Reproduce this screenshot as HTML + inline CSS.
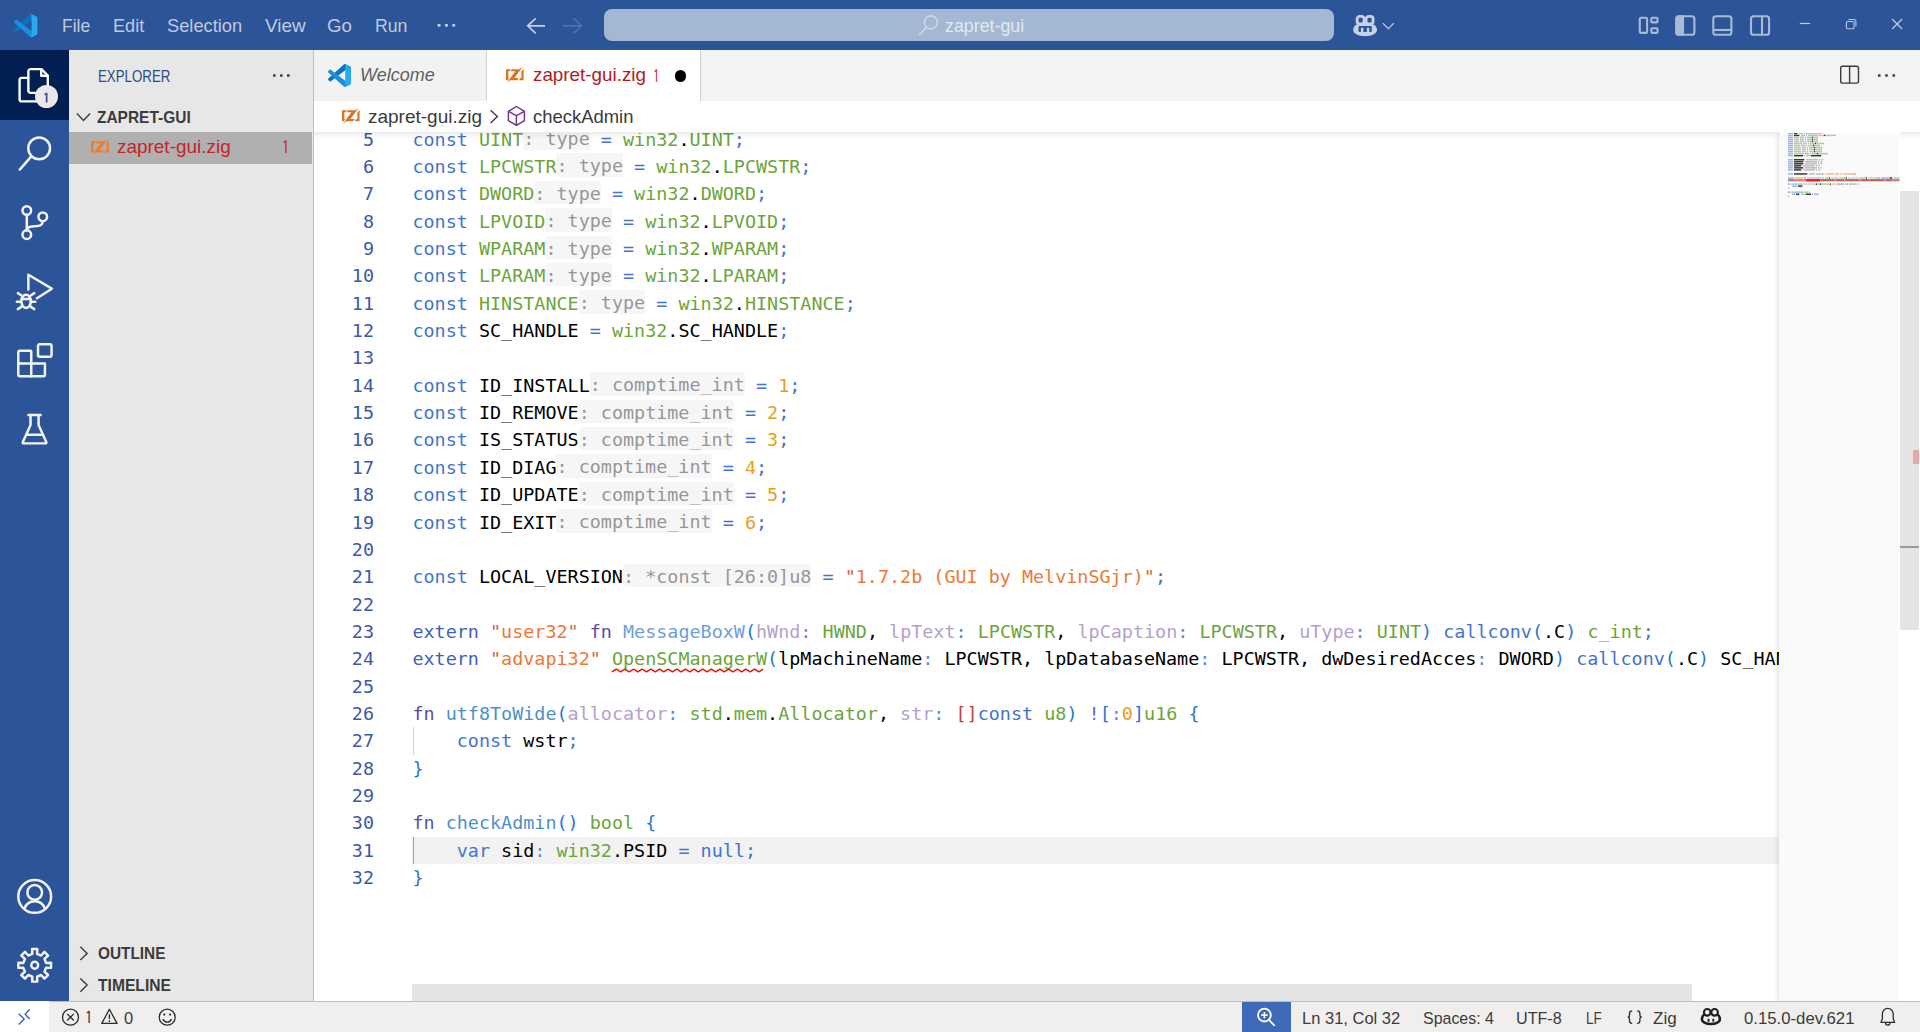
<!DOCTYPE html>
<html lang="en">
<head>
<meta charset="utf-8">
<title>zapret-gui.zig - zapret-gui - Visual Studio Code</title>
<style>
*{box-sizing:border-box;margin:0;padding:0}
html,body{width:1920px;height:1032px;overflow:hidden;background:#fff}
body{font-family:"Liberation Sans",sans-serif;color:#3b3b3b;position:relative;-webkit-font-smoothing:antialiased}
.abs{position:absolute}
.t{position:absolute;white-space:pre;line-height:1;transform-origin:0 50%;display:block}
svg{position:absolute;overflow:visible}
#titlebar{left:0;top:0;width:1920px;height:50px;background:#2c5499}
#activity{left:0;top:50px;width:69px;height:950.6px;background:#2c5499}
#act-active{left:0;top:50px;width:69px;height:69.5px;background:#011f50}
#sidebar{left:69px;top:50px;width:244.5px;height:950.6px;background:#e7e7e7}
#sideborder{left:313px;top:50px;width:1.2px;height:950.6px;background:#c0c0c0}
#selrow{left:69px;top:132px;width:243px;height:32px;background:#b0b0b0}
#tabbar{left:314px;top:50px;width:1606px;height:51px;background:#f3f3f3}
#tab1{left:314px;top:50px;width:172.5px;height:51px;background:#f2f2f2;border-right:1.3px solid #d0d0d0}
#tab2{left:486.6px;top:50px;width:214px;height:51px;background:#fff;border-right:1.3px solid #d0d0d0}
#crumbs{left:314px;top:101px;width:1606px;height:31.5px;background:#fff}
#editor{left:314px;top:132.5px;width:1606px;height:868.1px;background:#fff;overflow:hidden}
#edshadow{left:0;top:0;width:1606px;height:6px;background:linear-gradient(rgba(0,0,0,.11),rgba(0,0,0,0))}
#curline{left:98px;top:704.4px;width:1367.3px;height:27px;background:#f2f2f2}
#minimap{left:1465.3px;top:0;width:120.2px;height:868px;background:#fafafa;box-shadow:-3px 0 4px -1px rgba(0,0,0,.10)}
#vslider{left:1585.5px;top:58.3px;width:19.5px;height:439.2px;background:#e4e4e4}
#hslider{left:98px;top:851.8px;width:1279.8px;height:17px;background:#e4e4e4}
#status{left:0;top:1000.6px;width:1920px;height:32px;background:#f0efee;border-top:1.3px solid #bdbdbd}
#remote{left:0;top:1000.6px;width:49.2px;height:32px;background:#fff}
#zoomitem{left:1242px;top:1001.9px;width:48.8px;height:31px;background:#3f6ab8}
.code{position:absolute;left:0;white-space:pre;font-family:"DejaVu Sans Mono","Liberation Mono",monospace;font-size:18.42px;line-height:27.36px;height:27.36px;color:#000}
.ln{position:absolute;width:60px;text-align:right;left:0;white-space:pre;font-family:"DejaVu Sans Mono","Liberation Mono",monospace;font-size:18.42px;line-height:27.36px;height:27.36px;color:#3c58a8}
.k{color:#4373d0}.ke{color:#3d62b8}.kf{color:#574ea3}.ty{color:#6ba539}.f{color:#4d8fcc}.fe{color:#6c9fdb}
.p{color:#b4a0cc}.s{color:#f07832}.sq{color:#cf6a34}.n{color:#e5a019}.o{color:#4373d0}.c{color:#5b8bd8}.b{color:#2878d0}.br{color:#c04040}
.h{color:#969696;background:#f6f6f6;border-radius:3px;padding:2.4px 0 0}
.sq-err{}
</style>
</head>
<body>
<div class="abs" id="titlebar"></div>
<div class="abs" id="activity"></div>
<div class="abs" id="act-active"></div>
<div class="abs" id="sidebar"></div>
<div class="abs" id="selrow"></div>
<div class="abs" id="sideborder"></div>
<div class="abs" id="tabbar"></div>
<div class="abs" id="tab1"></div>
<div class="abs" id="tab2"></div>
<div class="abs" id="crumbs"></div>
<div class="abs" id="cmdcenter" style="left:604.3px;top:9.3px;width:729.5px;height:31.5px;background:#a4b8d3;border-radius:8px"></div>
<div class="abs" id="status"></div>
<div class="abs" id="remote"></div>
<div class="abs" id="zoomitem"></div>
<div class="abs" id="dirtydot" style="left:674.6px;top:70px;width:11.6px;height:11.6px;border-radius:50%;background:#000"></div>

<!-- text labels -->
<span class="t" style="left:61.90px;top:16.99px;font-size:18.72px;color:#c0cadf;transform:scaleX(0.9356)">File</span>
<span class="t" style="left:113.15px;top:16.99px;font-size:18.72px;color:#c0cadf;transform:scaleX(0.9679)">Edit</span>
<span class="t" style="left:167.40px;top:16.99px;font-size:18.72px;color:#c0cadf;transform:scaleX(0.9772)">Selection</span>
<span class="t" style="left:264.90px;top:16.99px;font-size:18.72px;color:#c0cadf;transform:scaleX(1.0124)">View</span>
<span class="t" style="left:327.40px;top:16.99px;font-size:18.72px;color:#c0cadf;transform:scaleX(0.9999)">Go</span>
<span class="t" style="left:375.15px;top:16.99px;font-size:18.72px;color:#c0cadf;transform:scaleX(0.9457)">Run</span>
<span class="t" style="left:945.40px;top:17.52px;font-size:17.5px;color:#e1e8f2;transform:scaleX(1.0176)">zapret-gui</span>
<span class="t" style="left:98.15px;top:68.69px;font-size:15.84px;color:#2c4a80;transform:scaleX(0.8403)">EXPLORER</span>
<span class="t" style="left:97.40px;top:110.44px;font-size:15.84px;color:#3b3b3b;transform:scaleX(0.9775);font-weight:700">ZAPRET-GUI</span>
<span class="t" style="left:117.40px;top:137.99px;font-size:18.72px;color:#c4242a;transform:scaleX(1.0126)">zapret-gui.zig</span>
<span class="t" style="left:281.90px;top:138.43px;font-size:18.2px;color:#c4242a;transform:scaleX(0.8192);font-family:'IPAGothic','Liberation Sans',sans-serif">1</span>
<span class="t" style="left:97.65px;top:946.19px;font-size:15.84px;color:#3b3b3b;transform:scaleX(0.9709);font-weight:700">OUTLINE</span>
<span class="t" style="left:97.65px;top:977.94px;font-size:15.84px;color:#3b3b3b;transform:scaleX(0.9875);font-weight:700">TIMELINE</span>
<span class="t" style="left:360.15px;top:66.24px;font-size:18.72px;color:#5f5f5f;transform:scaleX(0.9625);font-style:italic">Welcome</span>
<span class="t" style="left:532.65px;top:66.49px;font-size:18.72px;color:#b3191f;transform:scaleX(1.0060)">zapret-gui.zig</span>
<span class="t" style="left:653.40px;top:66.93px;font-size:18.2px;color:#c0353a;transform:scaleX(0.7368);font-family:'IPAGothic','Liberation Sans',sans-serif">1</span>
<span class="t" style="left:368.15px;top:108.49px;font-size:18.72px;color:#3b3b3b;transform:scaleX(1.0149)">zapret-gui.zig</span>
<span class="t" style="left:532.65px;top:108.49px;font-size:18.72px;color:#3b3b3b;transform:scaleX(0.9860)">checkAdmin</span>
<span class="t" style="left:85.40px;top:1009.44px;font-size:17.6px;color:#3b3b3b;transform:scaleX(0.8753);font-family:'IPAGothic','Liberation Sans',sans-serif">1</span>
<span class="t" style="left:124.40px;top:1009.71px;font-size:17.28px;color:#3b3b3b;transform:scaleX(0.9574)">0</span>
<span class="t" style="left:1301.90px;top:1009.71px;font-size:17.28px;color:#3b3b3b;transform:scaleX(0.9560)">Ln 31, Col 32</span>
<span class="t" style="left:1422.65px;top:1009.71px;font-size:17.28px;color:#3b3b3b;transform:scaleX(0.9239)">Spaces: 4</span>
<span class="t" style="left:1516.40px;top:1009.71px;font-size:17.28px;color:#3b3b3b;transform:scaleX(0.9341)">UTF-8</span>
<span class="t" style="left:1585.65px;top:1009.71px;font-size:17.28px;color:#3b3b3b;transform:scaleX(0.7789)">LF</span>
<span class="t" style="left:1653.15px;top:1009.71px;font-size:17.28px;color:#3b3b3b;transform:scaleX(0.9875)">Zig</span>
<span class="t" style="left:1743.90px;top:1009.71px;font-size:17.28px;color:#3b3b3b;transform:scaleX(0.9695)">0.15.0-dev.621</span>
<div class="abs" id="editor">
<div class="abs" id="curline"></div>
<div class="abs" style="left:98.5px;top:594.96px;width:1.4px;height:27.36px;background:#d3d3d3"></div>
<div class="abs" style="left:98.5px;top:704.40px;width:1.4px;height:27.36px;background:#a0a0a0"></div>
<div class="ln" style="top:-7.01px">5</div>
<div class="code" style="left:98.40px;top:-7.01px"><span class="k">const</span> <span class="ty">UINT</span><span class="h">: type</span> <span class="o">=</span> <span class="ty">win32</span>.<span class="ty">UINT</span><span class="o">;</span></div>
<div class="ln" style="top:20.35px">6</div>
<div class="code" style="left:98.40px;top:20.35px"><span class="k">const</span> <span class="ty">LPCWSTR</span><span class="h">: type</span> <span class="o">=</span> <span class="ty">win32</span>.<span class="ty">LPCWSTR</span><span class="o">;</span></div>
<div class="ln" style="top:47.71px">7</div>
<div class="code" style="left:98.40px;top:47.71px"><span class="k">const</span> <span class="ty">DWORD</span><span class="h">: type</span> <span class="o">=</span> <span class="ty">win32</span>.<span class="ty">DWORD</span><span class="o">;</span></div>
<div class="ln" style="top:75.07px">8</div>
<div class="code" style="left:98.40px;top:75.07px"><span class="k">const</span> <span class="ty">LPVOID</span><span class="h">: type</span> <span class="o">=</span> <span class="ty">win32</span>.<span class="ty">LPVOID</span><span class="o">;</span></div>
<div class="ln" style="top:102.43px">9</div>
<div class="code" style="left:98.40px;top:102.43px"><span class="k">const</span> <span class="ty">WPARAM</span><span class="h">: type</span> <span class="o">=</span> <span class="ty">win32</span>.<span class="ty">WPARAM</span><span class="o">;</span></div>
<div class="ln" style="top:129.79px">10</div>
<div class="code" style="left:98.40px;top:129.79px"><span class="k">const</span> <span class="ty">LPARAM</span><span class="h">: type</span> <span class="o">=</span> <span class="ty">win32</span>.<span class="ty">LPARAM</span><span class="o">;</span></div>
<div class="ln" style="top:157.15px">11</div>
<div class="code" style="left:98.40px;top:157.15px"><span class="k">const</span> <span class="ty">HINSTANCE</span><span class="h">: type</span> <span class="o">=</span> <span class="ty">win32</span>.<span class="ty">HINSTANCE</span><span class="o">;</span></div>
<div class="ln" style="top:184.51px">12</div>
<div class="code" style="left:98.40px;top:184.51px"><span class="k">const</span> SC_HANDLE <span class="o">=</span> <span class="ty">win32</span>.SC_HANDLE<span class="o">;</span></div>
<div class="ln" style="top:211.87px">13</div>
<div class="ln" style="top:239.23px">14</div>
<div class="code" style="left:98.40px;top:239.23px"><span class="k">const</span> ID_INSTALL<span class="h">: comptime_int</span> <span class="o">=</span> <span class="n">1</span><span class="o">;</span></div>
<div class="ln" style="top:266.59px">15</div>
<div class="code" style="left:98.40px;top:266.59px"><span class="k">const</span> ID_REMOVE<span class="h">: comptime_int</span> <span class="o">=</span> <span class="n">2</span><span class="o">;</span></div>
<div class="ln" style="top:293.95px">16</div>
<div class="code" style="left:98.40px;top:293.95px"><span class="k">const</span> IS_STATUS<span class="h">: comptime_int</span> <span class="o">=</span> <span class="n">3</span><span class="o">;</span></div>
<div class="ln" style="top:321.31px">17</div>
<div class="code" style="left:98.40px;top:321.31px"><span class="k">const</span> ID_DIAG<span class="h">: comptime_int</span> <span class="o">=</span> <span class="n">4</span><span class="o">;</span></div>
<div class="ln" style="top:348.67px">18</div>
<div class="code" style="left:98.40px;top:348.67px"><span class="k">const</span> ID_UPDATE<span class="h">: comptime_int</span> <span class="o">=</span> <span class="n">5</span><span class="o">;</span></div>
<div class="ln" style="top:376.03px">19</div>
<div class="code" style="left:98.40px;top:376.03px"><span class="k">const</span> ID_EXIT<span class="h">: comptime_int</span> <span class="o">=</span> <span class="n">6</span><span class="o">;</span></div>
<div class="ln" style="top:403.39px">20</div>
<div class="ln" style="top:430.75px">21</div>
<div class="code" style="left:98.40px;top:430.75px"><span class="k">const</span> LOCAL_VERSION<span class="h">: *const [26:0]u8</span> <span class="o">=</span> <span class="sq">&quot;</span><span class="s">1.7.2b (GUI by MelvinSGjr)</span><span class="sq">&quot;</span><span class="o">;</span></div>
<div class="ln" style="top:458.11px">22</div>
<div class="ln" style="top:485.47px">23</div>
<div class="code" style="left:98.40px;top:485.47px"><span class="ke">extern</span> <span class="sq">&quot;</span><span class="s">user32</span><span class="sq">&quot;</span> <span class="kf">fn</span> <span class="fe">MessageBoxW</span><span class="b">(</span><span class="p">hWnd</span><span class="c">:</span> <span class="ty">HWND</span>, <span class="p">lpText</span><span class="c">:</span> <span class="ty">LPCWSTR</span>, <span class="p">lpCaption</span><span class="c">:</span> <span class="ty">LPCWSTR</span>, <span class="p">uType</span><span class="c">:</span> <span class="ty">UINT</span><span class="b">)</span> <span class="k">callconv</span><span class="b">(</span>.C<span class="b">)</span> <span class="ty">c_int</span><span class="o">;</span></div>
<div class="ln" style="top:512.83px">24</div>
<div class="code" style="left:98.40px;top:512.83px"><span class="ke">extern</span> <span class="sq">&quot;</span><span class="s">advapi32</span><span class="sq">&quot;</span> <span class="ty sq-err">OpenSCManagerW</span><span class="b">(</span>lpMachineName<span class="c">:</span> LPCWSTR, lpDatabaseName<span class="c">:</span> LPCWSTR, dwDesiredAcces<span class="c">:</span> DWORD<span class="b">)</span> <span class="k">callconv</span><span class="b">(</span>.C<span class="b">)</span> SC_HANDLE;</div>
<div class="ln" style="top:540.19px">25</div>
<div class="ln" style="top:567.55px">26</div>
<div class="code" style="left:98.40px;top:567.55px"><span class="kf">fn</span> <span class="f">utf8ToWide</span><span class="b">(</span><span class="p">allocator</span><span class="c">:</span> <span class="ty">std</span>.<span class="ty">mem</span>.<span class="ty">Allocator</span>, <span class="p">str</span><span class="c">:</span> <span class="br">[]</span><span class="k">const</span> <span class="ty">u8</span><span class="b">)</span> <span class="o">!</span><span class="b">[</span><span class="c">:</span><span class="n">0</span><span class="b">]</span><span class="ty">u16</span> <span class="b">{</span></div>
<div class="ln" style="top:594.91px">27</div>
<div class="code" style="left:98.40px;top:594.91px">    <span class="k">const</span> wstr<span class="o">;</span></div>
<div class="ln" style="top:622.27px">28</div>
<div class="code" style="left:98.40px;top:622.27px"><span class="b">}</span></div>
<div class="ln" style="top:649.63px">29</div>
<div class="ln" style="top:676.99px">30</div>
<div class="code" style="left:98.40px;top:676.99px"><span class="kf">fn</span> <span class="f">checkAdmin</span><span class="b">()</span> <span class="ty">bool</span> <span class="b">{</span></div>
<div class="ln" style="top:704.35px">31</div>
<div class="code" style="left:98.40px;top:704.35px">    <span class="k">var</span> sid<span class="c">:</span> <span class="ty">win32</span>.PSID <span class="o">=</span> <span class="k">null</span><span class="o">;</span></div>
<div class="ln" style="top:731.71px">32</div>
<div class="code" style="left:98.40px;top:731.71px"><span class="b">}</span></div>
<svg style="left:0;top:0" width="1606" height="868" viewBox="0 0 1606 868"><path d="M297.98 538.88 L302.30 536.18 L306.62 538.88 L310.94 536.18 L315.26 538.88 L319.58 536.18 L323.90 538.88 L328.22 536.18 L332.54 538.88 L336.86 536.18 L341.18 538.88 L345.50 536.18 L349.82 538.88 L354.14 536.18 L358.46 538.88 L362.78 536.18 L367.10 538.88 L371.42 536.18 L375.74 538.88 L380.06 536.18 L384.38 538.88 L388.70 536.18 L393.02 538.88 L397.34 536.18 L401.66 538.88 L405.98 536.18 L410.30 538.88 L414.62 536.18 L418.94 538.88 L423.26 536.18 L427.58 538.88 L431.90 536.18 L436.22 538.88 L440.54 536.18 L444.86 538.88 L449.18 536.18" fill="none" stroke="#e51400" stroke-width="1.45" stroke-linejoin="round"/></svg>
<div class="abs" id="minimap"></div>
<svg style="left:0;top:0" width="1606" height="100" viewBox="0 0 1606 100"><rect x="1474" y="46.09" width="111.5" height="2.3" fill="#e51400" opacity=".5"/><rect x="1474.0" y="-0.40" width="5.0" height="1.5" fill="#4373d0" opacity="0.5"/><rect x="1480.0" y="-0.40" width="3.0" height="1.5" fill="#000000" opacity="0.78"/><rect x="1483.0" y="-0.40" width="1.0" height="1.5" fill="#8a8a8a" opacity="0.55"/><rect x="1485.0" y="-0.40" width="4.0" height="1.5" fill="#8a8a8a" opacity="0.55"/><rect x="1490.0" y="-0.40" width="1.0" height="1.5" fill="#4373d0" opacity="0.5"/><rect x="1492.0" y="-0.40" width="7.0" height="1.5" fill="#4d8fcc" opacity="0.5"/><rect x="1499.0" y="-0.40" width="1.0" height="1.5" fill="#2878d0" opacity="0.5"/><rect x="1500.0" y="-0.40" width="5.0" height="1.5" fill="#f07832" opacity="0.5"/><rect x="1505.0" y="-0.40" width="1.0" height="1.5" fill="#2878d0" opacity="0.5"/><rect x="1506.0" y="-0.40" width="1.0" height="1.5" fill="#4373d0" opacity="0.5"/><rect x="1474.0" y="1.63" width="5.0" height="1.5" fill="#4373d0" opacity="0.5"/><rect x="1480.0" y="1.63" width="5.0" height="1.5" fill="#000000" opacity="0.78"/><rect x="1485.0" y="1.63" width="1.0" height="1.5" fill="#8a8a8a" opacity="0.55"/><rect x="1487.0" y="1.63" width="4.0" height="1.5" fill="#8a8a8a" opacity="0.55"/><rect x="1492.0" y="1.63" width="1.0" height="1.5" fill="#4373d0" opacity="0.5"/><rect x="1494.0" y="1.63" width="7.0" height="1.5" fill="#4d8fcc" opacity="0.5"/><rect x="1501.0" y="1.63" width="1.0" height="1.5" fill="#2878d0" opacity="0.5"/><rect x="1502.0" y="1.63" width="7.0" height="1.5" fill="#f07832" opacity="0.5"/><rect x="1509.0" y="1.63" width="1.0" height="1.5" fill="#2878d0" opacity="0.5"/><rect x="1510.0" y="1.63" width="1.0" height="1.5" fill="#000000" opacity="0.78"/><rect x="1511.0" y="1.63" width="10.0" height="1.5" fill="#6ba539" opacity="0.5"/><rect x="1521.0" y="1.63" width="1.0" height="1.5" fill="#4373d0" opacity="0.5"/><rect x="1474.0" y="3.66" width="5.0" height="1.5" fill="#4373d0" opacity="0.5"/><rect x="1480.0" y="3.66" width="4.0" height="1.5" fill="#6ba539" opacity="0.5"/><rect x="1484.0" y="3.66" width="1.0" height="1.5" fill="#8a8a8a" opacity="0.55"/><rect x="1486.0" y="3.66" width="4.0" height="1.5" fill="#8a8a8a" opacity="0.55"/><rect x="1491.0" y="3.66" width="1.0" height="1.5" fill="#4373d0" opacity="0.5"/><rect x="1493.0" y="3.66" width="5.0" height="1.5" fill="#6ba539" opacity="0.5"/><rect x="1498.0" y="3.66" width="1.0" height="1.5" fill="#000000" opacity="0.78"/><rect x="1499.0" y="3.66" width="4.0" height="1.5" fill="#6ba539" opacity="0.5"/><rect x="1503.0" y="3.66" width="1.0" height="1.5" fill="#4373d0" opacity="0.5"/><rect x="1474.0" y="5.69" width="5.0" height="1.5" fill="#4373d0" opacity="0.5"/><rect x="1480.0" y="5.69" width="4.0" height="1.5" fill="#6ba539" opacity="0.5"/><rect x="1484.0" y="5.69" width="1.0" height="1.5" fill="#8a8a8a" opacity="0.55"/><rect x="1486.0" y="5.69" width="4.0" height="1.5" fill="#8a8a8a" opacity="0.55"/><rect x="1491.0" y="5.69" width="1.0" height="1.5" fill="#4373d0" opacity="0.5"/><rect x="1493.0" y="5.69" width="5.0" height="1.5" fill="#6ba539" opacity="0.5"/><rect x="1498.0" y="5.69" width="1.0" height="1.5" fill="#000000" opacity="0.78"/><rect x="1499.0" y="5.69" width="4.0" height="1.5" fill="#6ba539" opacity="0.5"/><rect x="1503.0" y="5.69" width="1.0" height="1.5" fill="#4373d0" opacity="0.5"/><rect x="1474.0" y="7.72" width="5.0" height="1.5" fill="#4373d0" opacity="0.5"/><rect x="1480.0" y="7.72" width="4.0" height="1.5" fill="#6ba539" opacity="0.5"/><rect x="1484.0" y="7.72" width="1.0" height="1.5" fill="#8a8a8a" opacity="0.55"/><rect x="1486.0" y="7.72" width="4.0" height="1.5" fill="#8a8a8a" opacity="0.55"/><rect x="1491.0" y="7.72" width="1.0" height="1.5" fill="#4373d0" opacity="0.5"/><rect x="1493.0" y="7.72" width="5.0" height="1.5" fill="#6ba539" opacity="0.5"/><rect x="1498.0" y="7.72" width="1.0" height="1.5" fill="#000000" opacity="0.78"/><rect x="1499.0" y="7.72" width="4.0" height="1.5" fill="#6ba539" opacity="0.5"/><rect x="1503.0" y="7.72" width="1.0" height="1.5" fill="#4373d0" opacity="0.5"/><rect x="1474.0" y="9.75" width="5.0" height="1.5" fill="#4373d0" opacity="0.5"/><rect x="1480.0" y="9.75" width="7.0" height="1.5" fill="#6ba539" opacity="0.5"/><rect x="1487.0" y="9.75" width="1.0" height="1.5" fill="#8a8a8a" opacity="0.55"/><rect x="1489.0" y="9.75" width="4.0" height="1.5" fill="#8a8a8a" opacity="0.55"/><rect x="1494.0" y="9.75" width="1.0" height="1.5" fill="#4373d0" opacity="0.5"/><rect x="1496.0" y="9.75" width="5.0" height="1.5" fill="#6ba539" opacity="0.5"/><rect x="1501.0" y="9.75" width="1.0" height="1.5" fill="#000000" opacity="0.78"/><rect x="1502.0" y="9.75" width="7.0" height="1.5" fill="#6ba539" opacity="0.5"/><rect x="1509.0" y="9.75" width="1.0" height="1.5" fill="#4373d0" opacity="0.5"/><rect x="1474.0" y="11.78" width="5.0" height="1.5" fill="#4373d0" opacity="0.5"/><rect x="1480.0" y="11.78" width="5.0" height="1.5" fill="#6ba539" opacity="0.5"/><rect x="1485.0" y="11.78" width="1.0" height="1.5" fill="#8a8a8a" opacity="0.55"/><rect x="1487.0" y="11.78" width="4.0" height="1.5" fill="#8a8a8a" opacity="0.55"/><rect x="1492.0" y="11.78" width="1.0" height="1.5" fill="#4373d0" opacity="0.5"/><rect x="1494.0" y="11.78" width="5.0" height="1.5" fill="#6ba539" opacity="0.5"/><rect x="1499.0" y="11.78" width="1.0" height="1.5" fill="#000000" opacity="0.78"/><rect x="1500.0" y="11.78" width="5.0" height="1.5" fill="#6ba539" opacity="0.5"/><rect x="1505.0" y="11.78" width="1.0" height="1.5" fill="#4373d0" opacity="0.5"/><rect x="1474.0" y="13.81" width="5.0" height="1.5" fill="#4373d0" opacity="0.5"/><rect x="1480.0" y="13.81" width="6.0" height="1.5" fill="#6ba539" opacity="0.5"/><rect x="1486.0" y="13.81" width="1.0" height="1.5" fill="#8a8a8a" opacity="0.55"/><rect x="1488.0" y="13.81" width="4.0" height="1.5" fill="#8a8a8a" opacity="0.55"/><rect x="1493.0" y="13.81" width="1.0" height="1.5" fill="#4373d0" opacity="0.5"/><rect x="1495.0" y="13.81" width="5.0" height="1.5" fill="#6ba539" opacity="0.5"/><rect x="1500.0" y="13.81" width="1.0" height="1.5" fill="#000000" opacity="0.78"/><rect x="1501.0" y="13.81" width="6.0" height="1.5" fill="#6ba539" opacity="0.5"/><rect x="1507.0" y="13.81" width="1.0" height="1.5" fill="#4373d0" opacity="0.5"/><rect x="1474.0" y="15.84" width="5.0" height="1.5" fill="#4373d0" opacity="0.5"/><rect x="1480.0" y="15.84" width="6.0" height="1.5" fill="#6ba539" opacity="0.5"/><rect x="1486.0" y="15.84" width="1.0" height="1.5" fill="#8a8a8a" opacity="0.55"/><rect x="1488.0" y="15.84" width="4.0" height="1.5" fill="#8a8a8a" opacity="0.55"/><rect x="1493.0" y="15.84" width="1.0" height="1.5" fill="#4373d0" opacity="0.5"/><rect x="1495.0" y="15.84" width="5.0" height="1.5" fill="#6ba539" opacity="0.5"/><rect x="1500.0" y="15.84" width="1.0" height="1.5" fill="#000000" opacity="0.78"/><rect x="1501.0" y="15.84" width="6.0" height="1.5" fill="#6ba539" opacity="0.5"/><rect x="1507.0" y="15.84" width="1.0" height="1.5" fill="#4373d0" opacity="0.5"/><rect x="1474.0" y="17.87" width="5.0" height="1.5" fill="#4373d0" opacity="0.5"/><rect x="1480.0" y="17.87" width="6.0" height="1.5" fill="#6ba539" opacity="0.5"/><rect x="1486.0" y="17.87" width="1.0" height="1.5" fill="#8a8a8a" opacity="0.55"/><rect x="1488.0" y="17.87" width="4.0" height="1.5" fill="#8a8a8a" opacity="0.55"/><rect x="1493.0" y="17.87" width="1.0" height="1.5" fill="#4373d0" opacity="0.5"/><rect x="1495.0" y="17.87" width="5.0" height="1.5" fill="#6ba539" opacity="0.5"/><rect x="1500.0" y="17.87" width="1.0" height="1.5" fill="#000000" opacity="0.78"/><rect x="1501.0" y="17.87" width="6.0" height="1.5" fill="#6ba539" opacity="0.5"/><rect x="1507.0" y="17.87" width="1.0" height="1.5" fill="#4373d0" opacity="0.5"/><rect x="1474.0" y="19.90" width="5.0" height="1.5" fill="#4373d0" opacity="0.5"/><rect x="1480.0" y="19.90" width="9.0" height="1.5" fill="#6ba539" opacity="0.5"/><rect x="1489.0" y="19.90" width="1.0" height="1.5" fill="#8a8a8a" opacity="0.55"/><rect x="1491.0" y="19.90" width="4.0" height="1.5" fill="#8a8a8a" opacity="0.55"/><rect x="1496.0" y="19.90" width="1.0" height="1.5" fill="#4373d0" opacity="0.5"/><rect x="1498.0" y="19.90" width="5.0" height="1.5" fill="#6ba539" opacity="0.5"/><rect x="1503.0" y="19.90" width="1.0" height="1.5" fill="#000000" opacity="0.78"/><rect x="1504.0" y="19.90" width="9.0" height="1.5" fill="#6ba539" opacity="0.5"/><rect x="1513.0" y="19.90" width="1.0" height="1.5" fill="#4373d0" opacity="0.5"/><rect x="1474.0" y="21.93" width="5.0" height="1.5" fill="#4373d0" opacity="0.5"/><rect x="1480.0" y="21.93" width="9.0" height="1.5" fill="#000000" opacity="0.78"/><rect x="1490.0" y="21.93" width="1.0" height="1.5" fill="#4373d0" opacity="0.5"/><rect x="1492.0" y="21.93" width="5.0" height="1.5" fill="#6ba539" opacity="0.5"/><rect x="1497.0" y="21.93" width="10.0" height="1.5" fill="#000000" opacity="0.78"/><rect x="1507.0" y="21.93" width="1.0" height="1.5" fill="#4373d0" opacity="0.5"/><rect x="1474.0" y="25.99" width="5.0" height="1.5" fill="#4373d0" opacity="0.5"/><rect x="1480.0" y="25.99" width="10.0" height="1.5" fill="#000000" opacity="0.78"/><rect x="1490.0" y="25.99" width="1.0" height="1.5" fill="#8a8a8a" opacity="0.55"/><rect x="1492.0" y="25.99" width="12.0" height="1.5" fill="#8a8a8a" opacity="0.55"/><rect x="1505.0" y="25.99" width="1.0" height="1.5" fill="#4373d0" opacity="0.5"/><rect x="1507.0" y="25.99" width="1.0" height="1.5" fill="#e5a019" opacity="0.5"/><rect x="1508.0" y="25.99" width="1.0" height="1.5" fill="#4373d0" opacity="0.5"/><rect x="1474.0" y="28.02" width="5.0" height="1.5" fill="#4373d0" opacity="0.5"/><rect x="1480.0" y="28.02" width="9.0" height="1.5" fill="#000000" opacity="0.78"/><rect x="1489.0" y="28.02" width="1.0" height="1.5" fill="#8a8a8a" opacity="0.55"/><rect x="1491.0" y="28.02" width="12.0" height="1.5" fill="#8a8a8a" opacity="0.55"/><rect x="1504.0" y="28.02" width="1.0" height="1.5" fill="#4373d0" opacity="0.5"/><rect x="1506.0" y="28.02" width="1.0" height="1.5" fill="#e5a019" opacity="0.5"/><rect x="1507.0" y="28.02" width="1.0" height="1.5" fill="#4373d0" opacity="0.5"/><rect x="1474.0" y="30.05" width="5.0" height="1.5" fill="#4373d0" opacity="0.5"/><rect x="1480.0" y="30.05" width="9.0" height="1.5" fill="#000000" opacity="0.78"/><rect x="1489.0" y="30.05" width="1.0" height="1.5" fill="#8a8a8a" opacity="0.55"/><rect x="1491.0" y="30.05" width="12.0" height="1.5" fill="#8a8a8a" opacity="0.55"/><rect x="1504.0" y="30.05" width="1.0" height="1.5" fill="#4373d0" opacity="0.5"/><rect x="1506.0" y="30.05" width="1.0" height="1.5" fill="#e5a019" opacity="0.5"/><rect x="1507.0" y="30.05" width="1.0" height="1.5" fill="#4373d0" opacity="0.5"/><rect x="1474.0" y="32.08" width="5.0" height="1.5" fill="#4373d0" opacity="0.5"/><rect x="1480.0" y="32.08" width="7.0" height="1.5" fill="#000000" opacity="0.78"/><rect x="1487.0" y="32.08" width="1.0" height="1.5" fill="#8a8a8a" opacity="0.55"/><rect x="1489.0" y="32.08" width="12.0" height="1.5" fill="#8a8a8a" opacity="0.55"/><rect x="1502.0" y="32.08" width="1.0" height="1.5" fill="#4373d0" opacity="0.5"/><rect x="1504.0" y="32.08" width="1.0" height="1.5" fill="#e5a019" opacity="0.5"/><rect x="1505.0" y="32.08" width="1.0" height="1.5" fill="#4373d0" opacity="0.5"/><rect x="1474.0" y="34.11" width="5.0" height="1.5" fill="#4373d0" opacity="0.5"/><rect x="1480.0" y="34.11" width="9.0" height="1.5" fill="#000000" opacity="0.78"/><rect x="1489.0" y="34.11" width="1.0" height="1.5" fill="#8a8a8a" opacity="0.55"/><rect x="1491.0" y="34.11" width="12.0" height="1.5" fill="#8a8a8a" opacity="0.55"/><rect x="1504.0" y="34.11" width="1.0" height="1.5" fill="#4373d0" opacity="0.5"/><rect x="1506.0" y="34.11" width="1.0" height="1.5" fill="#e5a019" opacity="0.5"/><rect x="1507.0" y="34.11" width="1.0" height="1.5" fill="#4373d0" opacity="0.5"/><rect x="1474.0" y="36.14" width="5.0" height="1.5" fill="#4373d0" opacity="0.5"/><rect x="1480.0" y="36.14" width="7.0" height="1.5" fill="#000000" opacity="0.78"/><rect x="1487.0" y="36.14" width="1.0" height="1.5" fill="#8a8a8a" opacity="0.55"/><rect x="1489.0" y="36.14" width="12.0" height="1.5" fill="#8a8a8a" opacity="0.55"/><rect x="1502.0" y="36.14" width="1.0" height="1.5" fill="#4373d0" opacity="0.5"/><rect x="1504.0" y="36.14" width="1.0" height="1.5" fill="#e5a019" opacity="0.5"/><rect x="1505.0" y="36.14" width="1.0" height="1.5" fill="#4373d0" opacity="0.5"/><rect x="1474.0" y="40.20" width="5.0" height="1.5" fill="#4373d0" opacity="0.5"/><rect x="1480.0" y="40.20" width="13.0" height="1.5" fill="#000000" opacity="0.78"/><rect x="1493.0" y="40.20" width="1.0" height="1.5" fill="#8a8a8a" opacity="0.55"/><rect x="1495.0" y="40.20" width="6.0" height="1.5" fill="#8a8a8a" opacity="0.55"/><rect x="1502.0" y="40.20" width="8.0" height="1.5" fill="#8a8a8a" opacity="0.55"/><rect x="1511.0" y="40.20" width="1.0" height="1.5" fill="#4373d0" opacity="0.5"/><rect x="1513.0" y="40.20" width="1.0" height="1.5" fill="#cf6a34" opacity="0.5"/><rect x="1514.0" y="40.20" width="6.0" height="1.5" fill="#f07832" opacity="0.5"/><rect x="1521.0" y="40.20" width="4.0" height="1.5" fill="#f07832" opacity="0.5"/><rect x="1526.0" y="40.20" width="2.0" height="1.5" fill="#f07832" opacity="0.5"/><rect x="1529.0" y="40.20" width="11.0" height="1.5" fill="#f07832" opacity="0.5"/><rect x="1540.0" y="40.20" width="1.0" height="1.5" fill="#cf6a34" opacity="0.5"/><rect x="1541.0" y="40.20" width="1.0" height="1.5" fill="#4373d0" opacity="0.5"/><rect x="1474.0" y="44.26" width="6.0" height="1.5" fill="#3d62b8" opacity="0.5"/><rect x="1481.0" y="44.26" width="1.0" height="1.5" fill="#cf6a34" opacity="0.5"/><rect x="1482.0" y="44.26" width="6.0" height="1.5" fill="#f07832" opacity="0.5"/><rect x="1488.0" y="44.26" width="1.0" height="1.5" fill="#cf6a34" opacity="0.5"/><rect x="1490.0" y="44.26" width="2.0" height="1.5" fill="#4e4c9c" opacity="0.5"/><rect x="1493.0" y="44.26" width="11.0" height="1.5" fill="#6c9fdb" opacity="0.5"/><rect x="1504.0" y="44.26" width="1.0" height="1.5" fill="#2878d0" opacity="0.5"/><rect x="1505.0" y="44.26" width="4.0" height="1.5" fill="#b4a0cc" opacity="0.5"/><rect x="1509.0" y="44.26" width="1.0" height="1.5" fill="#5b8bd8" opacity="0.5"/><rect x="1511.0" y="44.26" width="4.0" height="1.5" fill="#6ba539" opacity="0.5"/><rect x="1515.0" y="44.26" width="1.0" height="1.5" fill="#000000" opacity="0.78"/><rect x="1517.0" y="44.26" width="6.0" height="1.5" fill="#b4a0cc" opacity="0.5"/><rect x="1523.0" y="44.26" width="1.0" height="1.5" fill="#5b8bd8" opacity="0.5"/><rect x="1525.0" y="44.26" width="7.0" height="1.5" fill="#6ba539" opacity="0.5"/><rect x="1532.0" y="44.26" width="1.0" height="1.5" fill="#000000" opacity="0.78"/><rect x="1534.0" y="44.26" width="9.0" height="1.5" fill="#b4a0cc" opacity="0.5"/><rect x="1543.0" y="44.26" width="1.0" height="1.5" fill="#5b8bd8" opacity="0.5"/><rect x="1545.0" y="44.26" width="7.0" height="1.5" fill="#6ba539" opacity="0.5"/><rect x="1552.0" y="44.26" width="1.0" height="1.5" fill="#000000" opacity="0.78"/><rect x="1554.0" y="44.26" width="5.0" height="1.5" fill="#b4a0cc" opacity="0.5"/><rect x="1559.0" y="44.26" width="1.0" height="1.5" fill="#5b8bd8" opacity="0.5"/><rect x="1561.0" y="44.26" width="4.0" height="1.5" fill="#6ba539" opacity="0.5"/><rect x="1565.0" y="44.26" width="1.0" height="1.5" fill="#2878d0" opacity="0.5"/><rect x="1567.0" y="44.26" width="8.0" height="1.5" fill="#4373d0" opacity="0.5"/><rect x="1575.0" y="44.26" width="1.0" height="1.5" fill="#2878d0" opacity="0.5"/><rect x="1576.0" y="44.26" width="2.0" height="1.5" fill="#000000" opacity="0.78"/><rect x="1578.0" y="44.26" width="1.0" height="1.5" fill="#2878d0" opacity="0.5"/><rect x="1580.0" y="44.26" width="5.0" height="1.5" fill="#6ba539" opacity="0.5"/><rect x="1585.0" y="44.26" width="0.5" height="1.5" fill="#4373d0" opacity="0.5"/><rect x="1474.0" y="46.29" width="6.0" height="1.5" fill="#3d62b8" opacity="0.4"/><rect x="1481.0" y="46.29" width="1.0" height="1.5" fill="#cf6a34" opacity="0.4"/><rect x="1482.0" y="46.29" width="8.0" height="1.5" fill="#f07832" opacity="0.4"/><rect x="1490.0" y="46.29" width="1.0" height="1.5" fill="#cf6a34" opacity="0.4"/><rect x="1492.0" y="46.29" width="14.0" height="1.5" fill="#6ba539" opacity="0.4"/><rect x="1506.0" y="46.29" width="1.0" height="1.5" fill="#2878d0" opacity="0.4"/><rect x="1507.0" y="46.29" width="13.0" height="1.5" fill="#5a1010" opacity="0.38"/><rect x="1520.0" y="46.29" width="1.0" height="1.5" fill="#5b8bd8" opacity="0.4"/><rect x="1522.0" y="46.29" width="8.0" height="1.5" fill="#5a1010" opacity="0.38"/><rect x="1531.0" y="46.29" width="14.0" height="1.5" fill="#5a1010" opacity="0.38"/><rect x="1545.0" y="46.29" width="1.0" height="1.5" fill="#5b8bd8" opacity="0.4"/><rect x="1547.0" y="46.29" width="8.0" height="1.5" fill="#5a1010" opacity="0.38"/><rect x="1556.0" y="46.29" width="14.0" height="1.5" fill="#5a1010" opacity="0.38"/><rect x="1570.0" y="46.29" width="1.0" height="1.5" fill="#5b8bd8" opacity="0.4"/><rect x="1572.0" y="46.29" width="5.0" height="1.5" fill="#5a1010" opacity="0.38"/><rect x="1577.0" y="46.29" width="1.0" height="1.5" fill="#2878d0" opacity="0.4"/><rect x="1579.0" y="46.29" width="6.5" height="1.5" fill="#4373d0" opacity="0.4"/><rect x="1474.0" y="50.35" width="2.0" height="1.5" fill="#4e4c9c" opacity="0.5"/><rect x="1477.0" y="50.35" width="10.0" height="1.5" fill="#4d8fcc" opacity="0.5"/><rect x="1487.0" y="50.35" width="1.0" height="1.5" fill="#2878d0" opacity="0.5"/><rect x="1488.0" y="50.35" width="9.0" height="1.5" fill="#b4a0cc" opacity="0.5"/><rect x="1497.0" y="50.35" width="1.0" height="1.5" fill="#5b8bd8" opacity="0.5"/><rect x="1499.0" y="50.35" width="3.0" height="1.5" fill="#6ba539" opacity="0.5"/><rect x="1502.0" y="50.35" width="1.0" height="1.5" fill="#000000" opacity="0.78"/><rect x="1503.0" y="50.35" width="3.0" height="1.5" fill="#6ba539" opacity="0.5"/><rect x="1506.0" y="50.35" width="1.0" height="1.5" fill="#000000" opacity="0.78"/><rect x="1507.0" y="50.35" width="9.0" height="1.5" fill="#6ba539" opacity="0.5"/><rect x="1516.0" y="50.35" width="1.0" height="1.5" fill="#000000" opacity="0.78"/><rect x="1518.0" y="50.35" width="3.0" height="1.5" fill="#b4a0cc" opacity="0.5"/><rect x="1521.0" y="50.35" width="1.0" height="1.5" fill="#5b8bd8" opacity="0.5"/><rect x="1523.0" y="50.35" width="2.0" height="1.5" fill="#c04040" opacity="0.5"/><rect x="1525.0" y="50.35" width="5.0" height="1.5" fill="#4373d0" opacity="0.5"/><rect x="1531.0" y="50.35" width="2.0" height="1.5" fill="#6ba539" opacity="0.5"/><rect x="1533.0" y="50.35" width="1.0" height="1.5" fill="#2878d0" opacity="0.5"/><rect x="1535.0" y="50.35" width="1.0" height="1.5" fill="#4373d0" opacity="0.5"/><rect x="1536.0" y="50.35" width="1.0" height="1.5" fill="#2878d0" opacity="0.5"/><rect x="1537.0" y="50.35" width="1.0" height="1.5" fill="#5b8bd8" opacity="0.5"/><rect x="1538.0" y="50.35" width="1.0" height="1.5" fill="#e5a019" opacity="0.5"/><rect x="1539.0" y="50.35" width="1.0" height="1.5" fill="#2878d0" opacity="0.5"/><rect x="1540.0" y="50.35" width="3.0" height="1.5" fill="#6ba539" opacity="0.5"/><rect x="1544.0" y="50.35" width="1.0" height="1.5" fill="#2878d0" opacity="0.5"/><rect x="1478.0" y="52.38" width="5.0" height="1.5" fill="#4373d0" opacity="0.5"/><rect x="1484.0" y="52.38" width="4.0" height="1.5" fill="#000000" opacity="0.78"/><rect x="1488.0" y="52.38" width="1.0" height="1.5" fill="#4373d0" opacity="0.5"/><rect x="1474.0" y="54.41" width="1.0" height="1.5" fill="#2878d0" opacity="0.5"/><rect x="1474.0" y="58.47" width="2.0" height="1.5" fill="#4e4c9c" opacity="0.5"/><rect x="1477.0" y="58.47" width="10.0" height="1.5" fill="#4d8fcc" opacity="0.5"/><rect x="1487.0" y="58.47" width="2.0" height="1.5" fill="#2878d0" opacity="0.5"/><rect x="1490.0" y="58.47" width="4.0" height="1.5" fill="#6ba539" opacity="0.5"/><rect x="1495.0" y="58.47" width="1.0" height="1.5" fill="#2878d0" opacity="0.5"/><rect x="1478.0" y="60.50" width="3.0" height="1.5" fill="#4373d0" opacity="0.5"/><rect x="1482.0" y="60.50" width="3.0" height="1.5" fill="#000000" opacity="0.78"/><rect x="1485.0" y="60.50" width="1.0" height="1.5" fill="#5b8bd8" opacity="0.5"/><rect x="1487.0" y="60.50" width="5.0" height="1.5" fill="#6ba539" opacity="0.5"/><rect x="1492.0" y="60.50" width="5.0" height="1.5" fill="#000000" opacity="0.78"/><rect x="1498.0" y="60.50" width="1.0" height="1.5" fill="#4373d0" opacity="0.5"/><rect x="1500.0" y="60.50" width="4.0" height="1.5" fill="#4373d0" opacity="0.5"/><rect x="1504.0" y="60.50" width="1.0" height="1.5" fill="#4373d0" opacity="0.5"/><rect x="1474.0" y="62.53" width="1.0" height="1.5" fill="#2878d0" opacity="0.5"/><rect x="1492" y="46.09" width="14" height="2.3" fill="#ff1a0a"/></svg>
<div class="abs" style="left:1585.5px;top:0;width:20.5px;height:868px;background:#fff"></div>
<div class="abs" id="vslider"></div>
<div class="abs" style="left:1598.8px;top:317px;width:6.2px;height:14px;background:#e5a9a9"></div>
<div class="abs" style="left:1586px;top:413.7px;width:19px;height:1.8px;background:#9a9a9a"></div>
<div class="abs" id="hslider"></div>
</div>
<div class="abs" style="left:314px;top:131.8px;width:1465.5px;height:8px;background:linear-gradient(rgba(0,0,0,.08),rgba(0,0,0,.03) 45%,rgba(0,0,0,0))"></div>
<div class="abs" style="left:1899.5px;top:131.8px;width:20.5px;height:8px;background:linear-gradient(rgba(0,0,0,.08),rgba(0,0,0,.03) 45%,rgba(0,0,0,0))"></div>
<svg style="left:17.28px;top:67.68px" width="34.56" height="34.56" viewBox="0 0 24 24" ><g fill="none" stroke="#fff" stroke-width="1.65" stroke-linejoin="round" stroke-linecap="round"><path d="M9.4.8H17l4.4 4.4v10.6a1.5 1.5 0 0 1-1.5 1.5H9.4a1.5 1.5 0 0 1-1.5-1.5V2.3A1.5 1.5 0 0 1 9.4.8z"/><path d="M16.8 1v4.4h4.4"/><path d="M7.7 6.9H3.3a1.5 1.5 0 0 0-1.5 1.5v13.3a1.5 1.5 0 0 0 1.5 1.5h10.5a1.5 1.5 0 0 0 1.5-1.5v-4.2"/></g></svg>
<div class="abs" id="badge" style="left:35.1px;top:85px;width:23px;height:23px;border-radius:50%;background:#e9e9e9"></div>
<span class="t" style="left:42.9px;top:91.9px;font-size:13.4px;font-weight:700;font-family:IPAGothic,sans-serif;color:#3a4f9c">1</span>
<svg style="left:17.28px;top:136.8px" width="34.56" height="34.56" viewBox="0 0 24 24" ><g fill="none" stroke="#f3f3f3" stroke-width="1.72" stroke-linecap="round" stroke-linejoin="round"><circle cx="15.4" cy="7.9" r="7.55"/><path d="M10.1 13.3 1.9 22.7"/></g></svg>
<svg style="left:17.28px;top:205.92000000000002px" width="34.56" height="34.56" viewBox="0 0 24 24" ><g fill="none" stroke="#f3f3f3" stroke-width="1.72" stroke-linecap="round" stroke-linejoin="round"><circle cx="6.8" cy="3.1" r="3"/><circle cx="17.9" cy="7.5" r="3"/><circle cx="6.8" cy="19.9" r="3"/><path d="M6.8 6.1v10.8"/><path d="M17.9 10.5c0 3.3-2.6 3.6-5.4 3.6-2.6 0-5.7.4-5.7 2.6"/></g></svg>
<svg style="left:17.28px;top:275.04px" width="34.56" height="34.56" viewBox="0 0 24 24" ><g fill="none" stroke="#f3f3f3" stroke-width="1.72" stroke-linecap="round" stroke-linejoin="round"><path d="M7.9 10V-.2l16.3 9.7-10.3 6.7"/><ellipse cx="6.3" cy="18.3" rx="3.3" ry="4.6"/><path d="M3.2 16.6h6.2"/><path d="M3.1 14.3 .6 12.6M9.5 14.3l2.5-1.7M2.9 18.6H-.1M9.7 18.6h3M3.4 21.8 .6 23.7M9.2 21.8l2.8 1.9"/></g></svg>
<svg style="left:17.28px;top:344.16px" width="34.56" height="34.56" viewBox="0 0 24 24" ><g fill="none" stroke="#f3f3f3" stroke-width="1.72" stroke-linecap="round" stroke-linejoin="round"><path d="M9.400 4.700H1.900a1 1 0 0 0-1 1v15.700a1 1 0 0 0 1 1h16.500a1 1 0 0 0 1-1v-7.900H9.900V5.200a.5.5 0 0 0-.5-.5z"/><path d="M9.900 13.500v8.900M.9 13.500h9"/><rect x="14.6" y=".2" width="9.4" height="8.6" rx="1.2"/></g></svg>
<svg style="left:17.28px;top:413.28000000000003px" width="34.56" height="34.56" viewBox="0 0 24 24" ><g fill="none" stroke="#f3f3f3" stroke-width="1.72" stroke-linecap="round" stroke-linejoin="round"><path d="M8 1.4h8.400"/><path d="M9.400 1.400v6.900L4 20.300a.6.6 0 0 0 .5.800h15.400a.6.6 0 0 0 .5-.800L15 8.300V1.400"/><path d="M6.900 15.100h10.600"/></g></svg>
<svg style="left:17.28px;top:879.2px" width="34.56" height="34.56" viewBox="0 0 24 24" ><g fill="none" stroke="#f3f3f3" stroke-width="1.72" stroke-linecap="round" stroke-linejoin="round"><circle cx="12.3" cy="12.1" r="11.4"/><circle cx="12.3" cy="9.3" r="5.1"/><path d="M5.2 20.6c1.2-3.4 3.9-5.1 7.1-5.1s5.9 1.7 7.1 5.1"/></g></svg>
<svg style="left:17.28px;top:948.3px" width="34.56" height="34.56" viewBox="0 0 24 24" ><g fill="none" stroke="#f3f3f3" stroke-width="1.72" stroke-linecap="round" stroke-linejoin="round" stroke-width="1.75"><path d="M10.66 4.07 L10.50 0.64 L14.10 0.64 L13.94 4.07 L16.75 5.23 L19.06 2.70 L21.60 5.24 L19.07 7.55 L20.23 10.36 L23.66 10.20 L23.66 13.80 L20.23 13.64 L19.07 16.45 L21.60 18.76 L19.06 21.30 L16.75 18.77 L13.94 19.93 L14.10 23.36 L10.50 23.36 L10.66 19.93 L7.85 18.77 L5.54 21.30 L3.00 18.76 L5.53 16.45 L4.37 13.64 L0.94 13.80 L0.94 10.20 L4.37 10.36 L5.53 7.55 L3.00 5.24 L5.54 2.70 L7.85 5.23z"/><circle cx="12.3" cy="12" r="2.4"/></g></svg>
<svg style="left:13.9px;top:13.8px" width="23.4" height="23.4" viewBox="0 0 100 100"><path d="M96.4614 10.7962L75.8569 0.875542C73.4719 -0.272773 70.6217 0.211611 68.75 2.08333L1.29858 63.5832C-0.515693 65.2373 -0.513607 68.0937 1.30308 69.7452L6.81272 74.754C8.29793 76.1042 10.5347 76.2036 12.1338 74.9905L93.3609 13.3699C96.086 11.3026 100 13.2462 100 16.6667V16.4275C100 14.0265 98.6246 11.8378 96.4614 10.7962Z" fill="#0a74c4"/><path d="M96.4614 89.2038L75.8569 99.1245C73.4719 100.273 70.6217 99.7884 68.75 97.9167L1.29858 36.4169C-0.515693 34.7627 -0.513607 31.9063 1.30308 30.2548L6.81272 25.246C8.29793 23.8958 10.5347 23.7964 12.1338 25.0095L93.3609 86.6301C96.086 88.6974 100 86.7538 100 83.3334V83.5726C100 85.9735 98.6246 88.1622 96.4614 89.2038Z" fill="#1a8fe0"/><path d="M75.8578 99.1263C73.4721 100.274 70.6219 99.7885 68.75 97.9166C71.0564 100.223 75 98.5895 75 95.3278V4.67213C75 1.41039 71.0564 -0.223106 68.75 2.08329C70.6219 0.211402 73.4721 -0.273666 75.8578 0.873633L96.4587 10.7807C98.6234 11.8217 100 14.0112 100 16.4132V83.5871C100 85.9891 98.6234 88.1786 96.4586 89.2196L75.8578 99.1263Z" fill="#27a9f3"/></svg>
<svg style="left:328.2px;top:63.8px" width="23" height="23" viewBox="0 0 100 100"><path d="M96.4614 10.7962L75.8569 0.875542C73.4719 -0.272773 70.6217 0.211611 68.75 2.08333L1.29858 63.5832C-0.515693 65.2373 -0.513607 68.0937 1.30308 69.7452L6.81272 74.754C8.29793 76.1042 10.5347 76.2036 12.1338 74.9905L93.3609 13.3699C96.086 11.3026 100 13.2462 100 16.6667V16.4275C100 14.0265 98.6246 11.8378 96.4614 10.7962Z" fill="#0a74c4"/><path d="M96.4614 89.2038L75.8569 99.1245C73.4719 100.273 70.6217 99.7884 68.75 97.9167L1.29858 36.4169C-0.515693 34.7627 -0.513607 31.9063 1.30308 30.2548L6.81272 25.246C8.29793 23.8958 10.5347 23.7964 12.1338 25.0095L93.3609 86.6301C96.086 88.6974 100 86.7538 100 83.3334V83.5726C100 85.9735 98.6246 88.1622 96.4614 89.2038Z" fill="#1a8fe0"/><path d="M75.8578 99.1263C73.4721 100.274 70.6219 99.7885 68.75 97.9166C71.0564 100.223 75 98.5895 75 95.3278V4.67213C75 1.41039 71.0564 -0.223106 68.75 2.08329C70.6219 0.211402 73.4721 -0.273666 75.8578 0.873633L96.4587 10.7807C98.6234 11.8217 100 14.0112 100 16.4132V83.5871C100 85.9891 98.6234 88.1786 96.4586 89.2196L75.8578 99.1263Z" fill="#27a9f3"/></svg>
<svg style="left:0;top:0" width="1920" height="1032" viewBox="0 0 1920 1032"><rect x="437.65000000000003" y="23.9" width="2.9" height="2.9" rx=".7" fill="#c5cfe2"/><rect x="444.95" y="23.9" width="2.9" height="2.9" rx=".7" fill="#c5cfe2"/><rect x="452.25" y="23.9" width="2.9" height="2.9" rx=".7" fill="#c5cfe2"/><path d="M545 25.8H527.6M535.7 18.4l-8 7.4 8 7.6" fill="none" stroke="#c5cfe2" stroke-width="1.7"/><path d="M562.8 25.8h18.8M573.5 18.4l8 7.4-8 7.6" fill="none" stroke="#5574ab" stroke-width="1.5"/><g fill="none" stroke="#ccd7e6" stroke-width="1.6" stroke-linecap="round"><circle cx="930.9" cy="22.4" r="6.5"/><path d="M926.4 27.4l-6.9 7.3"/></g><path d="M1382.8 23.2l5.5 5.5 5.5-5.5" fill="none" stroke="#c5cfe2" stroke-width="1.2"/><g fill="none" stroke="#a9b9d6" stroke-width="2.1" stroke-linejoin="round"><rect x="1639.8" y="17.8" width="7.3" height="15.1" rx="1.2"/><rect x="1651.3" y="17.8" width="6.2" height="4.6" rx="1"/><rect x="1651.3" y="28.3" width="6.2" height="4.6" rx="1"/><rect x="1676.3" y="16.3" width="18.1" height="18.5" rx="2.6"/><rect x="1713.3" y="16.3" width="18.1" height="18.5" rx="2.6"/><path d="M1713.3 30h18.1"/><rect x="1751" y="16.3" width="18.1" height="18.5" rx="2.6"/><path d="M1762 16.3v18.5"/></g><path d="M1678.9 15.3h5.2v20.5h-5.2a3.6 3.6 0 0 1-3.6-3.6V18.9a3.6 3.6 0 0 1 3.6-3.6z" fill="#a9b9d6"/><path d="M1799.8 23.5h10.4" stroke="#c5cfe2" stroke-width="1.2"/><g fill="none" stroke="#b7c5e0" stroke-width="1.15"><rect x="1846.4" y="21.5" width="7.6" height="7.2" rx="1.3"/><path d="M1848.4 19.5h5.6a1.9 1.9 0 0 1 1.9 1.9v5.2"/></g><path d="M1892.1 19l10 10M1902.1 19l-10 10" stroke="#c5cfe2" stroke-width="1.15"/></svg>
<svg style="left:1352.9px;top:14.8px" width="24.2" height="21.2" viewBox="0 0 24.2 21.2"><path d="M3.4 9.600C1.400 11 .2 12.800 .2 15c0 3.600 5.300 6.200 11.900 6.200S24 18.600 24 15c0-2.200-1.200-4-3.200-5.400z" fill="#c8d2e4"/><rect x="6" y="5" width="12.2" height="7" fill="#c8d2e4"/><rect x="5.500" y="11" width="13.300" height="6" rx="1" fill="#2c5499"/><rect x="7.900" y="12.800" width="2.500" height="4.700" fill="#c8d2e4"/><rect x="13.800" y="12.800" width="2.500" height="4.700" fill="#c8d2e4"/><g fill="#2c5499" stroke="#c8d2e4" stroke-width="2.8"><rect x="4.100" y="1.400" width="7" height="7.500" rx="2.700"/><rect x="13.100" y="1.400" width="7" height="7.500" rx="2.700"/></g></svg>
<svg style="left:506px;top:67px" width="17.6" height="15.7" viewBox="0 0 17.6 15.7"><g fill="#db7421"><path d="M0 2.300H4.900L3.500 4.300H2.300V11.100H3.300L1.700 13.200H0z"/><path d="M5.900 2.300H13.300L16.700 0 8.400 11.100H12.700L11.200 13.200H4.300L1 15.700 9.300 4.300H4.500z"/><path d="M17.600 2.300V13.200H12.800L14.300 11.100H15.400V4.600L17.100 2.300z"/></g></svg>
<svg style="left:91.1px;top:139px" width="17.952" height="16.014" viewBox="0 0 17.6 15.7"><g fill="#ee7d2b"><path d="M0 2.300H4.900L3.500 4.300H2.300V11.100H3.300L1.700 13.200H0z"/><path d="M5.900 2.300H13.300L16.700 0 8.400 11.100H12.700L11.200 13.200H4.300L1 15.700 9.300 4.300H4.500z"/><path d="M17.600 2.300V13.200H12.800L14.300 11.100H15.400V4.600L17.100 2.300z"/></g></svg>
<svg style="left:342px;top:108.2px" width="17.6" height="15.7" viewBox="0 0 17.6 15.7"><g fill="#db7421"><path d="M0 2.300H4.900L3.500 4.300H2.300V11.100H3.300L1.700 13.200H0z"/><path d="M5.900 2.300H13.300L16.700 0 8.400 11.100H12.700L11.200 13.200H4.300L1 15.700 9.300 4.300H4.500z"/><path d="M17.600 2.300V13.200H12.800L14.300 11.100H15.400V4.600L17.100 2.300z"/></g></svg>
<svg style="left:0;top:0" width="1920" height="1032" viewBox="0 0 1920 1032"><path d="M490.600 110.200l6.800 6.300-6.800 6.500" fill="none" stroke="#3b3b3b" stroke-width="1.35"/><g fill="none" stroke="#6a2f96" stroke-width="1.4" stroke-linejoin="round"><path d="M516.400 106.500l8 4.900v9.300l-8 4.700-8-4.700v-9.300z"/><path d="M508.400 111.400l8 4.300 8-4.300M516.400 115.700v9.700"/></g><path d="M76.900 113.600l6.600 6.800 6.600-6.800" fill="none" stroke="#3b3b3b" stroke-width="1.4"/><path d="M80.400 946.800l6.700 6.600-6.700 6.600" fill="none" stroke="#3b3b3b" stroke-width="1.4"/><path d="M80.400 978.500l6.700 6.600-6.700 6.600" fill="none" stroke="#3b3b3b" stroke-width="1.4"/><rect x="273.0" y="74.200" width="2.600" height="2.600" rx=".6" fill="#3b3b3b"/><rect x="280.0" y="74.200" width="2.600" height="2.600" rx=".6" fill="#3b3b3b"/><rect x="287.0" y="74.200" width="2.600" height="2.600" rx=".6" fill="#3b3b3b"/><rect x="1877.9" y="74.200" width="2.600" height="2.600" rx=".6" fill="#3b3b3b"/><rect x="1885.2" y="74.200" width="2.600" height="2.600" rx=".6" fill="#3b3b3b"/><rect x="1892.5" y="74.200" width="2.600" height="2.600" rx=".6" fill="#3b3b3b"/><g fill="none" stroke="#3b3b3b" stroke-width="1.4"><rect x="1840.700" y="66.200" width="17.800" height="16.900" rx="1.800"/><path d="M1849.600 66.200v16.900"/></g><path d="M18.800 1013.800l5.400 5.300-5.400 5.400M29.700 1009.400l-4.600 4.900 4.600 4.700" fill="none" stroke="#3a5daa" stroke-width="1.35"/><g fill="none" stroke="#2b2b2b" stroke-width="1.3"><circle cx="70.500" cy="1017.200" r="8"/><path d="M67.200 1013.900l6.600 6.600M73.800 1013.900l-6.600 6.600"/><path d="M109.400 1009.300l7.600 14.100h-15.200z" stroke-linejoin="round"/><path d="M109.400 1014.300v4.700M109.400 1020.300v1.600"/><circle cx="167.200" cy="1017.200" r="8"/><path d="M162.900 1019.100c1 2 2.500 3 4.300 3s3.300-1 4.300-3"/></g><circle cx="164.300" cy="1014.600" r="1.100" fill="#2b2b2b"/><circle cx="170.100" cy="1014.600" r="1.100" fill="#2b2b2b"/><g fill="none" stroke="#fff" stroke-width="1.800" stroke-linecap="round"><circle cx="1264.400" cy="1015.100" r="6.400"/><path d="M1269.200 1020.200l5 5.100"/><path d="M1261.200 1015.100h6.400M1264.400 1011.900v6.400" stroke-width="1.600" stroke-linecap="butt"/></g><g fill="none" stroke="#2b2b2b" stroke-width="1.3"><path d="M1632.200 1010.900c-2.400 0-2.700 1-2.700 2.600v1.600c0 1.200-.5 2-1.800 2 1.300 0 1.800.8 1.800 2v1.600c0 1.600.3 2.600 2.700 2.600"/><path d="M1637.200 1010.900c2.400 0 2.700 1 2.700 2.600v1.600c0 1.200.5 2 1.800 2-1.300 0-1.800.8-1.800 2v1.600c0 1.600-.3 2.600-2.700 2.600"/></g><g fill="none" stroke="#2b2b2b" stroke-width="1.300" stroke-linejoin="round"><path d="M1881 1022.400l1.400-3.900v-4.700a5.400 5.400 0 0 1 10.800 0v4.700l1.400 3.900z"/><path d="M1885.500 1022.800a2.300 2.300 0 0 0 4.600 0"/></g><g fill="none" stroke="#1f1f1f"><path d="M1704.300 1014.600C1702.500 1015.900 1701.900 1017.400 1701.900 1019 1701.900 1022 1705.800 1024.100 1710.900 1024.100S1719.900 1022 1719.900 1019C1719.900 1017.400 1719.300 1015.900 1717.500 1014.600" stroke-width="2.500"/><circle cx="1707.200" cy="1012.300" r="3.300" stroke-width="2.100" fill="#f0efee"/><circle cx="1714.600" cy="1012.300" r="3.300" stroke-width="2.100" fill="#f0efee"/><path d="M1708.500 1018.700v3M1713.300 1018.700v3" stroke-width="1.900"/></g></svg>

</body>
</html>
